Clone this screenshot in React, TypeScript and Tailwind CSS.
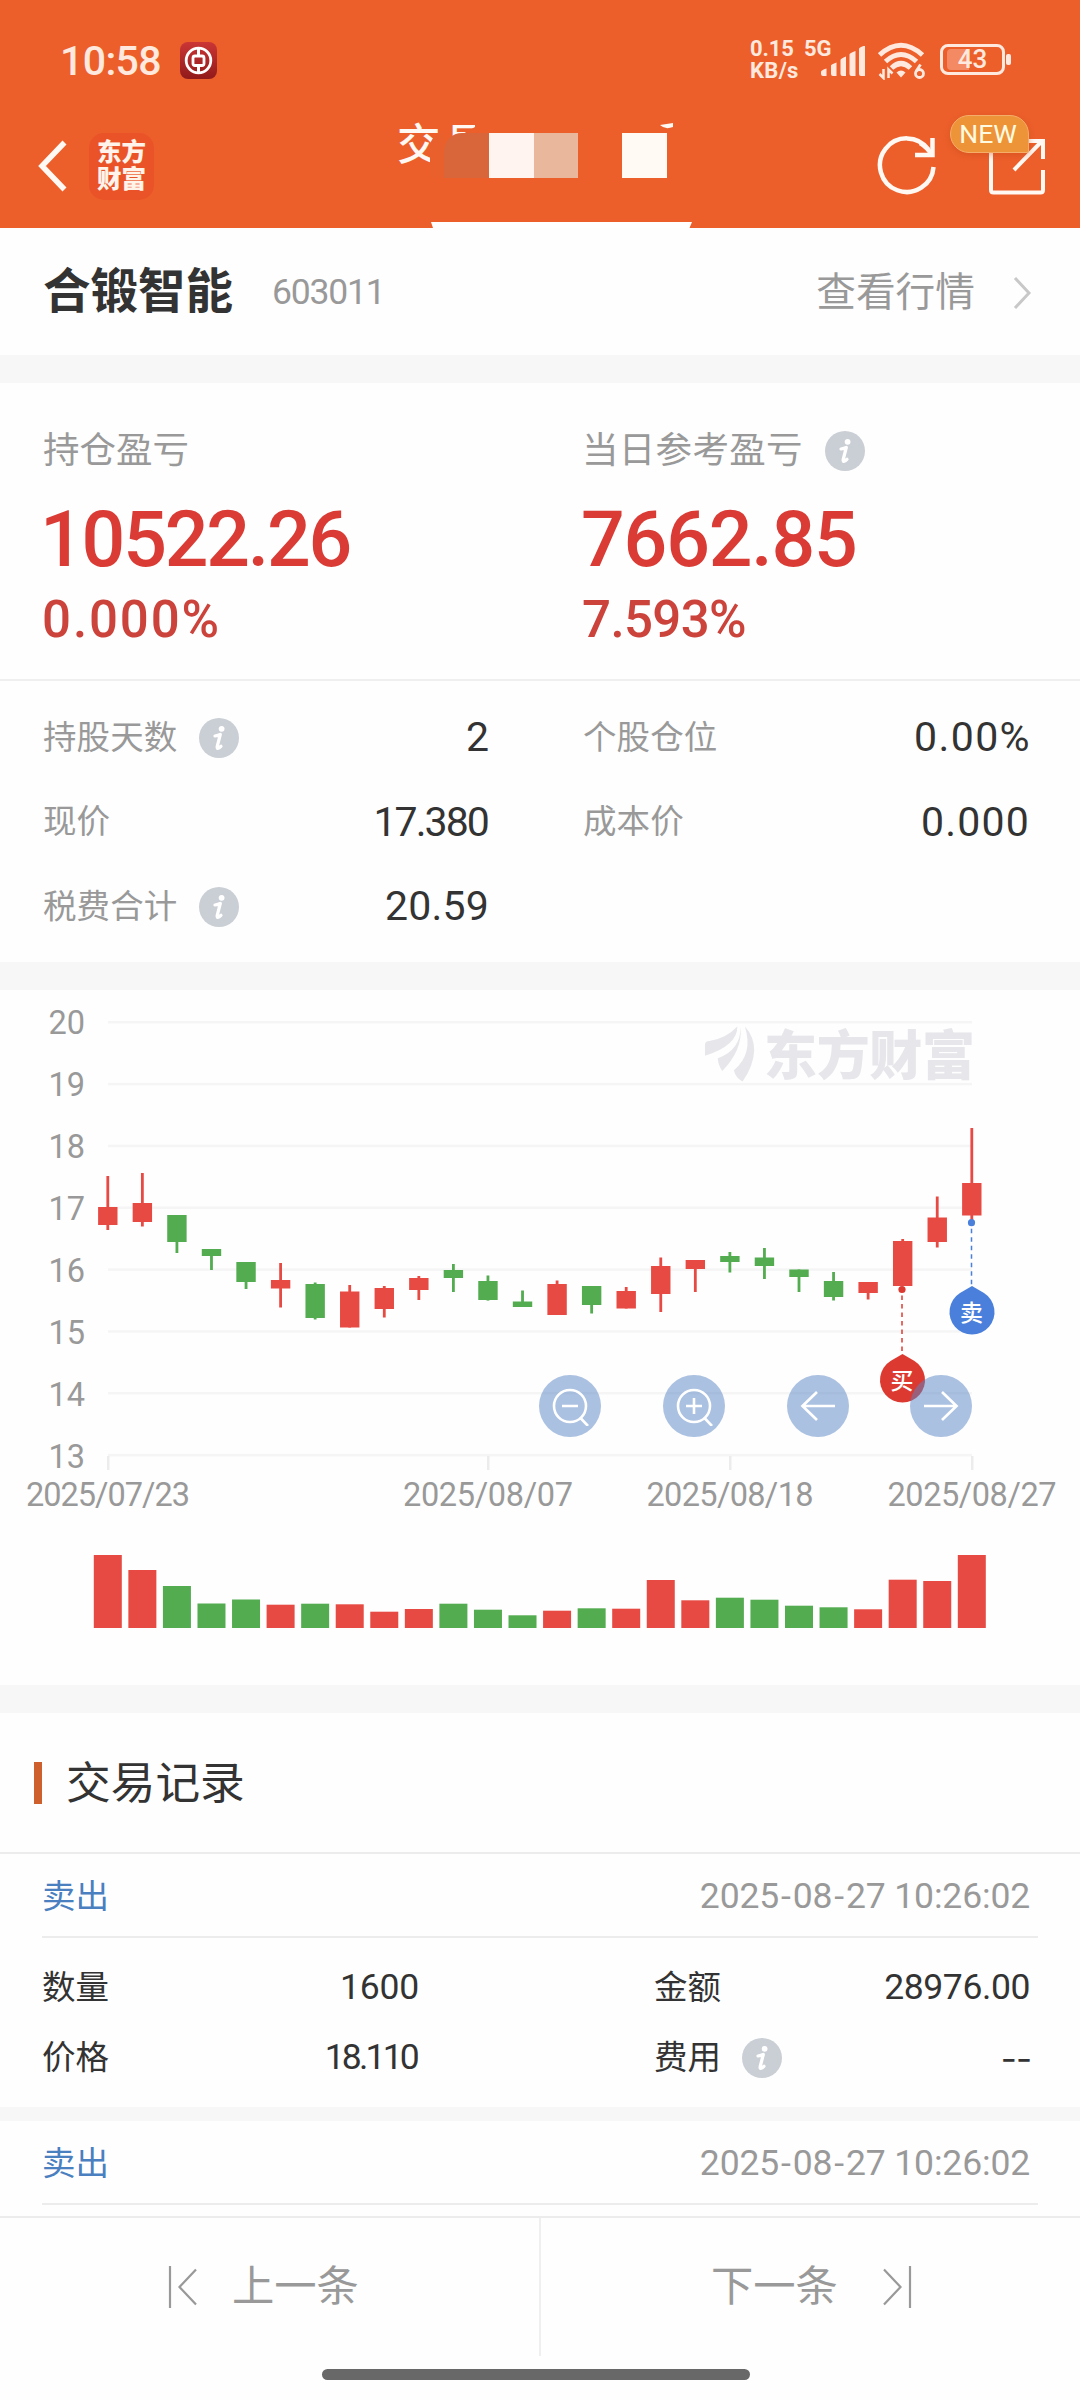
import React from "react";

const RED = "#e74a43";
const GREEN = "#53ac50";

// [color, high, body top, body bottom, low, volume top]
const candles: [string, number, number, number, number, number][] = [
  [RED, 1176, 1207, 1225, 1230, 1555],
  [RED, 1173, 1203, 1222, 1226.5, 1570],
  [GREEN, 1215, 1215, 1242, 1253, 1586],
  [GREEN, 1249, 1249, 1256, 1270, 1603.5],
  [GREEN, 1262, 1262, 1282, 1289, 1599.5],
  [RED, 1263, 1280, 1288.5, 1307.5, 1604.7],
  [GREEN, 1282.5, 1284, 1318, 1319.5, 1603.7],
  [RED, 1285, 1291.5, 1327.5, 1327.5, 1604.3],
  [RED, 1286, 1288, 1309, 1317.5, 1611.7],
  [RED, 1276, 1278, 1290, 1300, 1609],
  [GREEN, 1264, 1270, 1278, 1292, 1603.7],
  [GREEN, 1275.5, 1281, 1300, 1300.6, 1609.7],
  [GREEN, 1290.5, 1301.5, 1307, 1307, 1615.3],
  [RED, 1280.5, 1284, 1315, 1315, 1610.7],
  [GREEN, 1286, 1286, 1305, 1313.5, 1608.3],
  [RED, 1287, 1291, 1308.5, 1308.5, 1608.7],
  [RED, 1257.5, 1266, 1294, 1312, 1580],
  [RED, 1260, 1260, 1269, 1292, 1600.3],
  [GREEN, 1252, 1256, 1262, 1272.5, 1597.7],
  [GREEN, 1248, 1257.5, 1266, 1279, 1599.7],
  [GREEN, 1269.5, 1269.5, 1277, 1292, 1605.7],
  [GREEN, 1272, 1281, 1297, 1300.5, 1607.3],
  [RED, 1282, 1282, 1293, 1299.5, 1609.3],
  [RED, 1239, 1241, 1286, 1286, 1579.7],
  [RED, 1196.5, 1217.5, 1242, 1247.5, 1581],
  [RED, 1128, 1183, 1215.5, 1221, 1555],
];

const cx = (i: number) => 107.8 + i * 34.56;

function Info({ className = "" }: { className?: string }) {
  return (
    <svg className={"shrink-0 " + className} width="40" height="40" viewBox="0 0 40 40">
      <circle cx="20" cy="20" r="20" fill="#cacfd5" />
      <circle cx="22.6" cy="10.8" r="2.900" fill="#fff" />
      <path d="M16 18Q19 17.500 21.300 16.500L18.200 28.500Q17.600 31.500 20 30L22 28.300" fill="none" stroke="#fff" strokeWidth="3.200" strokeLinecap="round" strokeLinejoin="round" />
    </svg>
  );
}

function StatusBar() {
  return (
    <div className="flex h-[120px] items-start text-[#ffe9df]">
      <span className="ml-[60px] mt-[41px] w-[120px] text-[41px] font-medium leading-[40px] tracking-[-0.600px]">10:58</span>
      <svg className="mt-[42px]" width="37" height="38" viewBox="0 0 37 38">
        <defs>
          <linearGradient id="bank" x1="0" y1="0" x2="0" y2="1">
            <stop offset="0" stopColor="#cb3535" />
            <stop offset="1" stopColor="#911a1a" />
          </linearGradient>
        </defs>
        <rect width="37" height="37" rx="8" fill="url(#bank)" />
        <g fill="none" stroke="#fff">
          <circle cx="18.5" cy="18.5" r="12.3" strokeWidth="2.8" />
          <rect x="13" y="14" width="11" height="9.5" rx="2" strokeWidth="2.8" />
          <path d="M18.5 6v8M18.5 24v7.5" strokeWidth="3" />
        </g>
      </svg>
      <div className="ml-[533px] mt-[38px] w-[54px] text-[22px] font-bold leading-[21.500px]">
        <div className="tracking-[-0.100px]">0.15</div>
        <div className="tracking-[0.300px]">KB/s</div>
      </div>
      <div className="relative h-[80px] w-[62px]">
        <span className="absolute left-0 top-[38px] text-[22px] font-bold leading-[22px]">5G</span>
        <svg className="absolute left-[16px] top-[46px]" width="48" height="31" viewBox="0 0 48 31" fill="#ffe9df">
          <path d="M1 26q0-2 5.500-3.500V30H3Q1 30 1 28ZM11 19.500q0-1 5.500-3V30H13Q11 30 11 28ZM20.500 14q0-1.500 5.500-3.500V30H22.500Q20.500 30 20.500 28ZM29.500 8.500q0-1.500 6-3.500V30H31.500Q29.500 30 29.500 28ZM39 3q0-1.500 6-3.500V30H41Q39 30 39 28Z" />
        </svg>
      </div>
      <svg className="ml-[12px] mt-[42px]" width="48" height="38" viewBox="0 0 48 38">
        <g fill="none" stroke="#ffe9df" strokeWidth="5">
          <path d="M1.500 13Q23 -6.500 44.500 13" />
          <path d="M7.500 19.500Q23 5.500 38.500 19.500" />
          <path d="M13.500 26Q23 17 32.500 26" />
        </g>
        <path d="M18.500 30.500q4.500-4 9 0l-4.500 5z" fill="#ffe9df" />
        <path d="M5.500 27v9l-4-4M10.500 36v-8.500l4 4" fill="none" stroke="#ffe9df" strokeWidth="2.500" />
        <circle cx="41.500" cy="31.500" r="4" fill="none" stroke="#ffe9df" strokeWidth="2.800" />
        <path d="M38 29.500L42.500 22.500" stroke="#ffe9df" strokeWidth="2.800" />
      </svg>
      <div className="ml-[14px] mt-[44px] flex items-center">
        <div className="relative flex h-[31px] w-[65px] items-center justify-center rounded-[8px] border-[3px] border-[#ffe9df] text-[26px] leading-[25px]">
          <div className="absolute left-[4px] top-[2px] h-[21px] w-[22px] rounded-l-[4px] bg-[#f48a64]" />
          <span className="relative font-medium">43</span>
        </div>
        <div className="ml-[1px] h-[11px] w-[5px] rounded-[2px] bg-[#ffe9df]" />
      </div>
    </div>
  );
}

function Header() {
  return (
    <header className="relative h-[228px] bg-[#ec5f2b]">
      <StatusBar />
      <div className="flex h-[92px] items-center pl-[38px]">
        <svg width="30" height="52" viewBox="0 0 30 52">
          <path d="M26.500 2.500L4 26L26.500 49.500" fill="none" stroke="#fff8f3" strokeWidth="5.500" />
        </svg>
        <div className="ml-[21px] flex h-[67px] w-[65px] flex-col items-center justify-center rounded-[15px] bg-[#ea5328] text-[24.5px] font-black leading-[27.500px] text-[#fff3ea]">
          <span>东方</span>
          <span>财富</span>
        </div>
        <svg className="ml-[723px]" width="60" height="60" viewBox="877 135 60 60">
          <g fill="none" stroke="#fff8f3" strokeWidth="4.500">
            <path d="M933.500 166A26.800 26.800 0 1 1 928.500 148.500" />
            <path d="M932.500 137V154H915" />
            <path d="M920 142Q927 146 932 154" />
          </g>
        </svg>
        <svg className="ml-[50px]" width="60" height="60" viewBox="987 136 60 60">
          <g fill="none" stroke="#fff8f3" strokeWidth="4">
            <path d="M991 141V190Q991 192.500 993.500 192.500H1040.500Q1043 192.500 1043 190V170" />
            <path d="M991 141H1043V159M1042 141L1014 170" />
          </g>
        </svg>
      </div>

      {/* Partly masked page title */}
      <span className="absolute left-[397px] top-[122px] text-[43.500px] font-medium leading-[48px] text-[#fff8f3]">交</span>
      <span className="absolute left-[445px] top-[121px] text-[43px] font-medium leading-[48px] text-[#fff8f3] [clip-path:polygon(0_0,30px_0,30px_6px,9px_18px,0_18px)]">易</span>
      <div className="absolute left-[430px] top-[133px] flex h-[45px]">
        <div className="w-[14px] rounded-tl-[14px] bg-[#e9602c]" />
        <div className="w-[45px] rounded-tl-[18px] bg-[#d8663a]" />
        <div className="w-[45px] bg-[#fff4ef]" />
        <div className="w-[44px] bg-[#e9b79b]" />
        <div className="ml-[44px] w-[45px] bg-[#fffaf3]" />
      </div>
      <svg className="absolute left-[660px] top-[123px]" width="14" height="6" viewBox="0 0 14 6">
        <path d="M0 2L13 0V4Q5 7 0 2Z" fill="#fff8f3" />
      </svg>

      <div className="absolute left-[950px] top-[115px] flex h-[38px] w-[79px] items-center justify-center rounded-[19px] rounded-br-[2px] border border-[#f5ae69] bg-[#ee9438] pr-[3px] text-[26.500px] leading-[30px] text-[#fffbe0] shadow-[0_2px_6px_rgba(190,70,20,0.4)]">
        NEW
      </div>
      <svg className="absolute left-[431px] top-[222px]" width="261" height="6" viewBox="0 0 261 6">
        <path d="M0 0H261L258.500 6H2Z" fill="#fff" />
      </svg>
    </header>
  );
}

const cell = "flex items-center h-[84.500px]";
const lab = "text-[33.500px] text-[#999] ml-px tracking-[0.100px]";

function Summary() {
  return (
    <section className="h-[579px]">
      <div className="flex h-[298px] border-b-2 border-[#efefef] pt-[44px]">
        <div className="w-[582px] pl-[43px]">
          <div className="flex h-[48px] items-center text-[36.500px] text-[#999]">持仓盈亏</div>
          <div className="-ml-[3px] mt-[23px] h-[84px] text-[77px] font-medium leading-[84px] tracking-[-2.200px] text-[#da3c35]">10522.26</div>
          <div className="-ml-px mt-[8px] h-[60px] text-[51px] font-medium leading-[60px] tracking-[1.900px] text-[#cb433b]">0.000%</div>
        </div>
        <div className="w-[498px]">
          <div className="flex h-[48px] items-center text-[36.500px] text-[#999]">
            <span className="tracking-[0.300px]">当日参考盈亏</span>
            <Info className="ml-[22px]" />
          </div>
          <div className="-ml-px mt-[23px] h-[84px] text-[77px] font-medium leading-[84px] tracking-[-1.200px] text-[#da3c35]">7662.85</div>
          <div className="mt-[8px] h-[60px] text-[51px] font-medium leading-[60px] tracking-[-0.600px] text-[#cb433b]">7.593%</div>
        </div>
      </div>
      <div className="grid grid-cols-[446px_447px] gap-x-[94px] pl-[42px] pt-[14.500px] text-[41px] text-[#333]">
        <div className={cell}>
          <span className={lab}>持股天数</span>
          <Info className="ml-[22px]" />
          <span className="-mr-px ml-auto">2</span>
        </div>
        <div className={cell}>
          <span className={lab}>个股仓位</span>
          <span className="-mr-[2px] ml-auto tracking-[1.400px]">0.00%</span>
        </div>
        <div className={cell}>
          <span className={lab}>现价</span>
          <span className="ml-auto tracking-[-1.900px]">17.380</span>
        </div>
        <div className={cell}>
          <span className={lab}>成本价</span>
          <span className="-mr-[1px] ml-auto tracking-[1.200px]">0.000</span>
        </div>
        <div className={cell}>
          <span className={lab}>税费合计</span>
          <Info className="ml-[22px]" />
          <span className="-mr-px ml-auto tracking-[0.200px]">20.59</span>
        </div>
      </div>
    </section>
  );
}

function Pin({ x, y, color, label, from }: { x: number; y: number; color: string; label: string; from: number }) {
  return (
    <g>
      <circle cx={x - 0.5} cy={from} r="3.600" fill={color} />
      <path d={`M${x - 0.5} ${from + 6}V${y - 26}`} stroke={color} strokeWidth="1.500" strokeDasharray="4.500 4" />
      <path d={`M${x} ${y - 26}L${x + 12} ${y - 19}A22.500 22.500 0 1 1 ${x - 12} ${y - 19}Z`} fill={color} />
      <text x={x - 0.5} y={y + 9} textAnchor="middle" fontSize="23" fontWeight="500" fill="#fff">{label}</text>
    </g>
  );
}

function Chart() {
  const dates: [number, string, number][] = [
    [108, "2025/07/23", 164],
    [488, "2025/08/07", 170],
    [730, "2025/08/18", 167],
    [972, "2025/08/27", 169],
  ];
  const btn = "absolute top-[385px] flex h-[62px] w-[62px] items-center justify-center rounded-full bg-[#5783c3]/50";
  return (
    <section className="relative h-[695px]">
      <svg className="block" width="1080" height="695" viewBox="0 990 1080 695">
        {Array.from({ length: 8 }, (_, k) => (
          <g key={k}>
            <rect x="108" y={1021 + k * 61.84} width="864" height="2.500" fill="#f5f5f6" />
            <text x="85" y={1034 + k * 61.95} textAnchor="end" fontSize="32.500" fill="#999">{20 - k}</text>
          </g>
        ))}
        {dates.map(([x, d, w]) => (
          <g key={d}>
            <rect x={x - 1} y="1456" width="2.500" height="14" fill="#ececec" />
            <text x={x - w / 2} y="1505.500" textLength={w} fontSize="32.500" fill="#999">{d}</text>
          </g>
        ))}
        <g transform="translate(540 980) scale(.3444)" fill="#e6e6eb">
          <path d="M479 188Q479 178 492 177Q540 170 573 135Q574 190 479 220Z" />
          <path d="M583 135Q588 205 529 264Q518 248 516 227Q582 205 583 135Z" />
          <path d="M595 135Q622 165 622 205Q620 250 588 295Q568 284 563 262Q620 215 595 135Z" />
        </g>
        <text x="764" y="1074.500" fontSize="53" fontWeight="900" textLength="211" fill="#e6e6eb">东方财富</text>
        {candles.map(([c, h, t, b, l, v], i) => (
          <g key={i} fill={c}>
            <rect x={cx(i) - 1.4} y={h} width="2.800" height={l - h} />
            <rect x={cx(i) - 9.7} y={t} width="19.400" height={b - t} />
            <rect x={cx(i) - 14} y={v} width="28" height={1628 - v} />
          </g>
        ))}
        <Pin x={902.5} y={1380} from={1289.5} color="#dc3a31" label="买" />
        <Pin x={972} y={1312} from={1222.7} color="#4a80db" label="卖" />
      </svg>
      <button className={btn + " left-[539px]"}>
        <svg width="40" height="40" viewBox="0 0 40 40" fill="none" stroke="#fff" strokeWidth="2.600">
          <circle cx="20" cy="20" r="16" />
          <path d="M12 20H28M30 31.500L38 40" />
        </svg>
      </button>
      <button className={btn + " left-[663px]"}>
        <svg width="40" height="40" viewBox="0 0 40 40" fill="none" stroke="#fff" strokeWidth="2.600">
          <circle cx="20" cy="20" r="16" />
          <path d="M12 20H28M20 12V28M30 31.500L38 40" />
        </svg>
      </button>
      <button className={btn + " left-[787px]"}>
        <svg width="36" height="32" viewBox="0 0 36 32" fill="none" stroke="#fff" strokeWidth="2.700">
          <path d="M35 16H2M17 2L2.500 16L17 30" />
        </svg>
      </button>
      <button className={btn + " left-[910px]"}>
        <svg width="36" height="32" viewBox="0 0 36 32" fill="none" stroke="#fff" strokeWidth="2.700">
          <path d="M1 16H34M19 2L33.500 16L19 30" />
        </svg>
      </button>
    </section>
  );
}

function TradeHead() {
  return (
    <div className="mx-[42px] flex h-[84px] items-center border-b-2 border-[#ececec] pr-[8px] pt-[4px] text-[33.500px] text-[#4a7fc0]">
      <span>卖出</span>
      <span className="ml-auto text-[35.500px] tracking-[-0.150px] text-[#999]">
        2025<span className="mx-[2px]">-</span>08<span className="mx-[2px]">-</span>27 10:26:02
      </span>
    </div>
  );
}

export default function App() {
  return (
    <div className="flex h-[2400px] w-[1080px] flex-col overflow-hidden whitespace-nowrap bg-[#fefefe] font-['Roboto','Noto_Sans_CJK_SC',sans-serif]">
      <Header />
      <div className="flex h-[127px] items-center pl-[43px] pr-[47px] pt-[2px]">
        <span className="text-[47.500px] font-bold text-[#333]">合锻智能</span>
        <span className="ml-[39px] mt-px text-[35.500px] tracking-[-1.200px] text-[#999]">603011</span>
        <span className="ml-auto text-[39.700px] text-[#999]">查看行情</span>
        <svg className="ml-[38px]" width="20" height="34" viewBox="0 0 20 34">
          <path d="M2 2L16 17L2 32" fill="none" stroke="#c8c8c8" strokeWidth="3" />
        </svg>
      </div>
      <div className="h-[28px] bg-[#f7f7f7]" />
      <Summary />
      <div className="h-[28px] bg-[#f7f7f7]" />
      <Chart />
      <div className="h-[28px] bg-[#f7f7f7]" />
      <section className="h-[503px] overflow-hidden">
        <div className="flex h-[141px] items-center border-b-2 border-[#ececec] pl-[34px]">
          <div className="h-[42px] w-[8px] bg-[#ce602d]" />
          <h2 className="ml-[24px] mt-[4px] text-[44.700px] text-[#333]">交易记录</h2>
        </div>
        <TradeHead />
        <div className="grid h-[169px] grid-cols-[376px_376px] content-start gap-x-[236px] pl-[42px] pt-[15px] text-[33.500px] text-[#333]">
          <div className="flex h-[70px] items-center">
            <span>数量</span>
            <span className="-mr-px ml-auto text-[35.500px] tracking-[-0.200px]">1600</span>
          </div>
          <div className="flex h-[70px] items-center">
            <span>金额</span>
            <span className="ml-auto text-[35.500px] tracking-[-0.400px]">28976.00</span>
          </div>
          <div className="flex h-[70px] items-center">
            <span>价格</span>
            <span className="mr-[1px] ml-auto text-[35.500px] tracking-[-2.800px]">18.110</span>
          </div>
          <div className="flex h-[70px] items-center">
            <span>费用</span>
            <Info className="ml-[21px]" />
            <span className="-mr-[1px] ml-auto font-['Inter'] text-[35px] tracking-[-1px]">--</span>
          </div>
        </div>
        <div className="h-[14px] bg-[#f7f7f7]" />
        <TradeHead />
      </section>
      <nav className="flex h-[140px] border-t-2 border-[#ececec] text-[42.300px] text-[#999]">
        <div className="flex w-[541px] items-center border-r-2 border-[#efefef] pl-[168px]">
          <svg width="30" height="42" viewBox="0 0 30 42" fill="none" stroke="#999" strokeWidth="2.200">
            <path d="M2 0V42M28 3.500L11.500 21L28 38.500" />
          </svg>
          <span className="ml-[34px]">上一条</span>
        </div>
        <div className="flex flex-1 items-center pl-[170px]">
          <span>下一条</span>
          <svg className="ml-[44px]" width="30" height="42" viewBox="0 0 30 42" fill="none" stroke="#999" strokeWidth="2.200">
            <path d="M28 0V42M2 3.500L18.500 21L2 38.500" />
          </svg>
        </div>
      </nav>
      <div className="ml-[322px] mt-[13px] h-[11px] w-[428px] rounded-full bg-[#686868]" />
    </div>
  );
}
